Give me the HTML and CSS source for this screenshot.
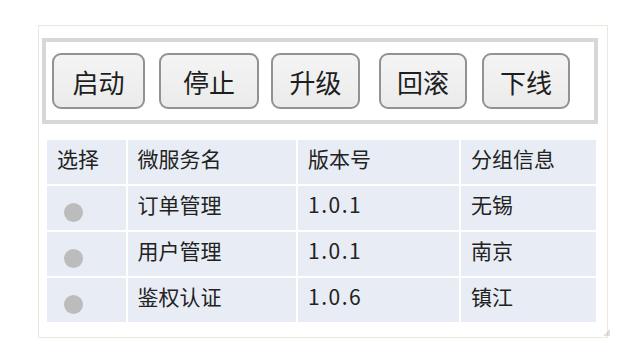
FILE: index.html
```html
<!DOCTYPE html>
<html lang="zh-CN">

<head>
    <meta charset="UTF-8">
    <meta name="viewport" content="width=device-width, initial-scale=1.0">
    <title>微服务管理</title>
    <link rel="stylesheet" href="styles.css">
</head>

<body>
    <div class="panel">
        <div class="toolbar">
            <button class="btn">启动</button>
            <button class="btn">停止</button>
            <button class="btn">升级</button>
            <button class="btn">回滚</button>
            <button class="btn">下线</button>
        </div>

        <table class="service-table">
            <thead>
                <tr>
                    <th class="col-select">选择</th>
                    <th class="col-name">微服务名</th>
                    <th class="col-version">版本号</th>
                    <th class="col-group">分组信息</th>
                </tr>
            </thead>
            <tbody>
                <tr>
                    <td><span class="dot"></span></td>
                    <td>订单管理</td>
                    <td class="version">1.0.1</td>
                    <td>无锡</td>
                </tr>
                <tr>
                    <td><span class="dot"></span></td>
                    <td>用户管理</td>
                    <td class="version">1.0.1</td>
                    <td>南京</td>
                </tr>
                <tr>
                    <td><span class="dot"></span></td>
                    <td>鉴权认证</td>
                    <td class="version">1.0.6</td>
                    <td>镇江</td>
                </tr>
            </tbody>
        </table>

        <svg class="grip" width="6" height="6" viewBox="0 0 6 6">
            <circle cx="5" cy="1" r="0.7" fill="#aaa" />
            <circle cx="3" cy="3" r="0.7" fill="#aaa" />
            <circle cx="5" cy="3" r="0.7" fill="#aaa" />
            <circle cx="1" cy="5" r="0.7" fill="#aaa" />
            <circle cx="3" cy="5" r="0.7" fill="#aaa" />
            <circle cx="5" cy="5" r="0.7" fill="#aaa" />
        </svg>
    </div>
</body>

</html>
```

FILE: styles.css
```css
body {
    margin: 0;
    background: #fff;
    color: #222;
    font-family: "Noto Sans CJK SC", "Noto Sans", sans-serif;
}

.panel {
    position: relative;
    box-sizing: border-box;
    width: 570px;
    height: 313px;
    margin: 25px 0 0 38px;
    padding: 12px 9px 0 3px;
    border: 1px solid #efe6dc;
}

.toolbar {
    box-sizing: border-box;
    height: 86px;
    padding-left: 6px;
    border: 4px solid #d7d7d7;
    display: flex;
    align-items: center;
}

.btn {
    box-sizing: border-box;
    width: 88px;
    height: 56px;
    padding: 0;
    border: 2px solid #929292;
    border-radius: 9px;
    background: linear-gradient(#f4f4f4, #ebebeb);
    color: #1e1e1e;
    font-family: inherit;
    font-size: 26px;
}

/* 按钮宽度和间距跟截图对齐 */
.btn:nth-child(1) {
    width: 93px;
    margin-right: 14px;
}

.btn:nth-child(2) {
    width: 100px;
    margin-right: 12px;
}

.btn:nth-child(3) {
    width: 89px;
    margin-right: 19px;
}

.btn:nth-child(4) {
    margin-right: 15px;
}

.service-table {
    margin: 14px 0 0 3px;
    border-collapse: separate;
    border-spacing: 2px;
    table-layout: fixed;
    font-size: 21px;
    line-height: 1.4;
}

.service-table th,
.service-table td {
    box-sizing: border-box;
    height: 44px;
    padding: 4px 10px 0;
    background: #e8edf5;
    color: #222;
    font-weight: normal;
    text-align: left;
    vertical-align: top;
}

.col-select {
    width: 79px;
}

.col-name {
    width: 170px;
}

.col-version {
    width: 162px;
}

.col-group {
    width: 136px;
}

.version {
    letter-spacing: 1.5px;
}

.dot {
    display: block;
    width: 19px;
    height: 19px;
    margin: 13px 0 0 7px;
    border-radius: 50%;
    background: #bcbcbc;
}

.grip {
    position: absolute;
    right: -3px;
    bottom: 1px;
}
```
